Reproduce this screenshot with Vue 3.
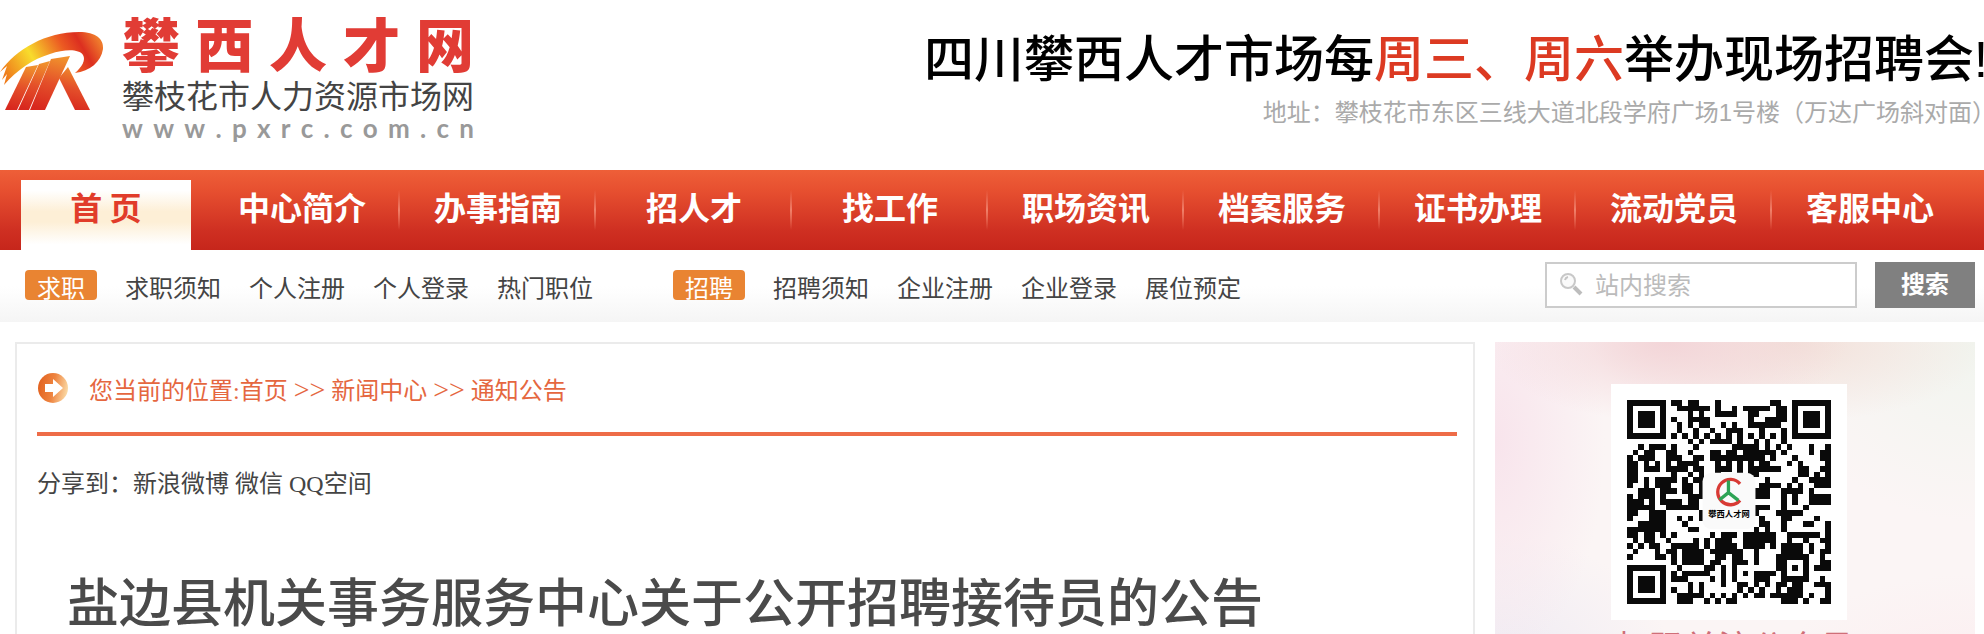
<script setup>
import { computed, ref } from 'vue'

const siteName = ['攀', '西', '人', '才', '网']
const siteUrl = 'www.pxrc.com.cn'.split('')

const navItems = [
  '中心简介',
  '办事指南',
  '招人才',
  '找工作',
  '职场资讯',
  '档案服务',
  '证书办理',
  '流动党员',
  '客服中心'
]

const subGroups = [
  { tag: '求职', links: ['求职须知', '个人注册', '个人登录', '热门职位'] },
  { tag: '招聘', links: ['招聘须知', '企业注册', '企业登录', '展位预定'] }
]

const crumbs = ['首页', '新闻中心', '通知公告']
const shareLinks = ['新浪微博', '微信', 'QQ空间']

const keyword = ref('')

// 37 x 37 modules
const qrRows = [
  '#######.##.##...#.........##..#######',
  '#.....#..######.#..#.#####.##.#.....#',
  '#.###.#....#.#..####..##...##.#.###.#',
  '#.###.#.#..####.......#..####.#.###.#',
  '#.###.#..#.#.##..#.#..######..#.###.#',
  '#.....#..#..#..#..###...#...#.#.....#',
  '#######.#.#.#.#.#.#.#.#.#.#.#.#######',
  '...........#.#.####.#..#.#..#........',
  '..#.###.#...#......#####.#.#.#...#..#',
  '.#.##..##..#...##.##.######.#....#.##',
  '#.###..###..##.##########.#...#....##',
  '##.#.#.#.####...#.#.#.#.##...#.#....#',
  '##.###.####.##..###.#.######...##..##',
  '##......#..#.#..#...#.##.......##.#.#',
  '##.#.####.#.##...........#....#..####',
  '#..#.###..##.#..........####.#.#..###',
  '..###.###.##.##........###..####.#...',
  '#.###.#....###.........###..#.#..####',
  '###.#.####.##...............#.#..####',
  '#####..######..........###..#...#....',
  '##..###......#.........#...#####.....',
  '#...###..#.#.#..........#...##....#..',
  '..#####...#.............##..#...##..#',
  '#######....##..........#.#..#.......#',
  '##.##.#.#......#.###.######..######.#',
  '.#.##..#....#.#.###..######..#..#..##',
  '#.#.##..#####.#.####.####.#.####.#..#',
  '.#...#.##.####.######..#....####.#.##',
  '#....##.#.####..##.##..#...######..#.',
  '........#.####.##..###.#...##...#..##',
  '#######..#....##.#.#.......##.#.#.###',
  '#.....#.#.#####..#.#.#.####.#...#....',
  '#.###.#.###....#.#.#...###..#####..#.',
  '#.###.#....#.#...#..##.#.#.##.##..###',
  '#.###.#.#..#.#......#.#.#..#.###....#',
  '#.....#..#####.#.#.#.#.##.######.#..#',
  '#######..###..#.#.##........###.#..##'
]

const qrPath = computed(() =>
  qrRows
    .map((row, y) =>
      [...row].map((cell, x) => (cell === '#' ? `M${x} ${y}h1v1h-1z` : '')).join('')
    )
    .join('')
)
</script>

<template>
  <div class="page">
    <header class="header">
      <a href="#" class="brand">
        <svg class="brand-mark" viewBox="0 0 104 80" aria-hidden="true">
          <defs>
            <linearGradient id="swoosh" x1="0" y1="0.6" x2="1" y2="0.3">
              <stop offset="0" stop-color="#ef7d1c" />
              <stop offset="0.32" stop-color="#f8dc2c" />
              <stop offset="0.65" stop-color="#ec5a22" />
              <stop offset="0.82" stop-color="#dc2f20" />
              <stop offset="1" stop-color="#ef7a2c" />
            </linearGradient>
            <linearGradient id="legs" x1="0.6" y1="0" x2="0.4" y2="1">
              <stop offset="0" stop-color="#f0902c" />
              <stop offset="0.5" stop-color="#e4502a" />
              <stop offset="1" stop-color="#d8281e" />
            </linearGradient>
          </defs>
          <path
            fill="url(#swoosh)"
            d="M0 40C16 17 46 0 79 0c17 0 25 7 24 17-2 13-13 22-28 24 7-6 11-13 8-18-4-6-18-6-33-1C33 27 17 38 4 53l3-11-5 6 5-14z"
          />
          <g fill="url(#legs)">
            <path d="M5 78L26 35l12-2L17 78z" />
            <path d="M18 78L39 32l11-3L29 78z" />
            <path d="M30 78L51 27l19-3L45 78z" />
            <path d="M59 46L68 35 90 78H75z" />
          </g>
        </svg>
        <span class="brand-text">
          <span class="brand-name">
            <span v-for="char in siteName" :key="char">{{ char }}</span>
          </span>
          <span class="brand-sub">攀枝花市人力资源市场网</span>
          <span class="brand-url">
            <span v-for="(char, i) in siteUrl" :key="i">{{ char }}</span>
          </span>
        </span>
      </a>
      <div class="banner">
        <p class="banner-title">四川攀西人才市场每<em>周三、周六</em>举办现场招聘会!</p>
        <p class="banner-address">地址：攀枝花市东区三线大道北段学府广场1号楼（万达广场斜对面）</p>
      </div>
    </header>

    <nav class="main-nav">
      <a href="#" class="nav-home">首 页</a>
      <a v-for="item in navItems" :key="item" href="#" class="nav-item">{{ item }}</a>
    </nav>

    <div class="sub-bar">
      <div v-for="group in subGroups" :key="group.tag" class="sub-group">
        <span class="tag">{{ group.tag }}</span>
        <a v-for="link in group.links" :key="link" href="#">{{ link }}</a>
      </div>
      <form class="search" @submit.prevent>
        <label class="search-box">
          <svg viewBox="0 0 24 24" aria-hidden="true">
            <circle cx="9" cy="9" r="7" fill="#fafafa" stroke="#c8c8c8" stroke-width="2" />
            <path d="M6 8a4 4 0 0 1 3-3" fill="none" stroke="#c4c4c4" stroke-width="2" />
            <path d="M15 15l7 7" stroke="#bdbdbd" stroke-width="4" />
          </svg>
          <input v-model="keyword" type="text" placeholder="站内搜索" aria-label="站内搜索" />
        </label>
        <button type="submit">搜索</button>
      </form>
    </div>

    <div class="content">
      <main class="article">
        <div class="crumbs">
          <svg class="crumb-icon" viewBox="0 0 32 32" aria-hidden="true">
            <defs>
              <linearGradient id="orb" x1="0" y1="0.4" x2="1" y2="0.6">
                <stop offset="0" stop-color="#e2621f" />
                <stop offset="0.5" stop-color="#ee8440" />
                <stop offset="1" stop-color="#fbdca8" />
              </linearGradient>
            </defs>
            <circle cx="16" cy="16" r="15" fill="url(#orb)" />
            <path d="M8 12h8V7l10 9-10 9v-5H8z" fill="#fff" />
          </svg>
          <p>
            您当前的位置:<template v-for="(crumb, i) in crumbs" :key="crumb"><span v-if="i" class="crumb-sep">&gt;&gt;</span><a href="#">{{ crumb }}</a></template>
          </p>
        </div>
        <p class="share">
          分享到：<template v-for="(link, i) in shareLinks" :key="link"><a href="#">{{ link }}</a>{{ i < shareLinks.length - 1 ? ' ' : '' }}</template>
        </p>
        <h1>盐边县机关事务服务中心关于公开招聘接待员的公告</h1>
      </main>

      <aside class="qr-panel">
        <div class="qr-card">
          <svg class="qr-code" viewBox="0 0 37 37" aria-hidden="true">
            <path :d="qrPath" fill="#0a0a0a" shape-rendering="crispEdges" />
            <rect x="13.7" y="13.2" width="9.6" height="10.2" rx="1.6" fill="#fafafa" />
            <path
              d="M20.5 15.2A2.3 2.3 0 1 0 20.5 18.2"
              fill="none"
              stroke="#d83a34"
              stroke-width="0.6"
            />
            <path
              d="M18.4 14.6v2.2M18.4 16.8l-1.6 1.3M18.4 16.8l1.8 1.4"
              fill="none"
              stroke="#2ea455"
              stroke-width="0.6"
            />
            <text x="18.5" y="21.3" text-anchor="middle" class="qr-label">攀西人才网</text>
          </svg>
        </div>
        <p>扫码关注公众号</p>
      </aside>
    </div>
  </div>
</template>

<style>
html,
body {
  height: 100%;
  overflow: hidden;
  background: #fff;
}
</style>

<style scoped>
.page {
  font-family: "Liberation Serif", "Noto Sans CJK SC", serif;
  font-size: 24px;
  line-height: 32px;
  color: #444;
}

p,
h1 {
  margin: 0;
}

a {
  color: inherit;
  text-decoration: none;
}

.header {
  display: flex;
  justify-content: space-between;
  height: 170px;
  overflow: hidden;
}

.brand {
  display: flex;
  gap: 18px;
}

.brand-mark {
  width: 104px;
  height: 80px;
  margin-top: 32px;
}

.brand-text {
  display: flex;
  flex-direction: column;
  width: 352px;
  padding-top: 10px;
}

.brand-name,
.brand-url {
  display: flex;
  justify-content: space-between;
}

.brand-name {
  font: 900 58px/64px "Noto Sans CJK SC", sans-serif;
  color: #e13c35;
}

.brand-sub {
  font-size: 32px;
  line-height: 46px;
  white-space: nowrap;
}

.brand-url {
  font: bold 26px/16px Lato, sans-serif;
  color: #999;
}

.banner {
  display: flex;
  flex-direction: column;
  align-items: flex-end;
  padding-top: 28px;
  white-space: nowrap;
}

/* both lines bleed to the window edge */
.banner-title {
  margin-right: -4px;
  font: 500 50px/64px "Liberation Sans", "Noto Sans CJK SC", sans-serif;
  color: #000;
}

.banner-title em {
  font-style: normal;
  color: #dc3a22;
}

.banner-address {
  margin-right: -12px;
  font: 24px/42px "Liberation Sans", "Noto Sans CJK SC", sans-serif;
  color: #aaa;
}

.main-nav {
  display: flex;
  height: 80px;
  padding: 0 16px 0 21px;
  box-sizing: border-box;
  background: linear-gradient(#ee5f38, #e75030 25%, #cf3022 75%, #c6261b);
  font: bold 32px/52px "Noto Sans CJK SC", sans-serif;
  color: #fff;
  text-align: center;
}

.nav-home {
  width: 170px;
  margin: 10px 13px 0 0;
  background: linear-gradient(#fff 15%, #fdefd6 45%, #fdefd6 60%, #fff 92%);
  color: #e13c2a;
}

.nav-item {
  flex: 1;
  padding-top: 10px;
  background: linear-gradient(transparent, #f0806a 50%, transparent) right 20px / 2px 40px no-repeat;
}

.nav-item:last-child {
  background: none;
}

.sub-bar {
  display: flex;
  height: 72px;
  padding: 0 9px 0 25px;
  box-sizing: border-box;
  background: linear-gradient(#fff 50%, #f5f5f5);
}

.sub-group {
  display: flex;
  gap: 28px;
  margin-right: 80px;
  padding-top: 20px;
  line-height: 38px;
}

.tag {
  height: 30px;
  padding: 0 12px;
  border-radius: 4px;
  background: #e98432;
  color: #fff;
}

.search {
  display: flex;
  gap: 18px;
  height: 46px;
  margin: 12px 0 0 auto;
}

.search-box {
  display: flex;
  align-items: center;
  gap: 12px;
  width: 312px;
  padding: 0 12px 2px;
  box-sizing: border-box;
  border: 2px solid #ccc;
  background: #fff;
}

.search-box svg {
  flex: none;
  width: 24px;
  height: 24px;
}

.search-box input {
  flex: 1;
  min-width: 0;
  padding: 0;
  border: 0;
  outline: 0;
  background: none;
  font: 24px/36px "Noto Sans CJK SC", sans-serif;
  color: #444;
}

.search-box input::placeholder {
  color: #bbb;
}

.search button {
  width: 100px;
  padding: 0 0 4px;
  border: 0;
  background: #808080;
  font: bold 24px/40px "Noto Sans CJK SC", sans-serif;
  color: #fff;
}

.content {
  display: flex;
  gap: 20px;
  padding: 20px 9px 0 15px;
}

.article {
  flex: 1;
  padding: 0 16px 0 20px;
  border: 2px solid #ebebeb;
}

.crumbs {
  display: flex;
  align-items: center;
  gap: 20px;
  height: 88px;
  border-bottom: 4px solid #ee6c48;
  color: #e5673f;
}

.crumbs p {
  padding-top: 4px;
}

.crumb-icon {
  width: 32px;
  height: 32px;
}

.crumb-sep {
  padding: 0 6px;
  font-size: 28px;
}

.share {
  padding-top: 32px;
}

h1 {
  padding: 68px 30px 40px;
  font: 500 52px/64px "Noto Sans CJK SC", sans-serif;
  color: #4a4a4a;
}

.qr-panel {
  display: flex;
  flex-direction: column;
  align-items: center;
  width: 480px;
  padding-top: 42px;
  box-sizing: border-box;
  background:
    radial-gradient(180px 80px at 36% 0, #f3d5d8, #f3d5d800),
    radial-gradient(200px 80px at 62% 0, #f2e0d9, #f2e0d900),
    radial-gradient(200px 180px at 100% 0, #f1f5ef, #f1f5ef00),
    radial-gradient(110px 220px at 0 30%, #f8e4ec, #f8e4ec00),
    radial-gradient(180px 140px at 0 100%, #eeeaf3, #eeeaf300),
    radial-gradient(200px 100px at 100% 100%, #fceef0, #fceef000),
    #fbf5f5;
}

.qr-card {
  padding: 16px;
  margin-right: 12px;
  background: #fff;
}

.qr-code {
  display: block;
  width: 204px;
  height: 204px;
}

.qr-label {
  font: bold 1.5px "Noto Sans CJK SC", sans-serif;
}

.qr-panel p {
  padding-top: 4px;
  font: 34px/44px "Noto Sans CJK SC", sans-serif;
  color: #cf6f78;
}
</style>
